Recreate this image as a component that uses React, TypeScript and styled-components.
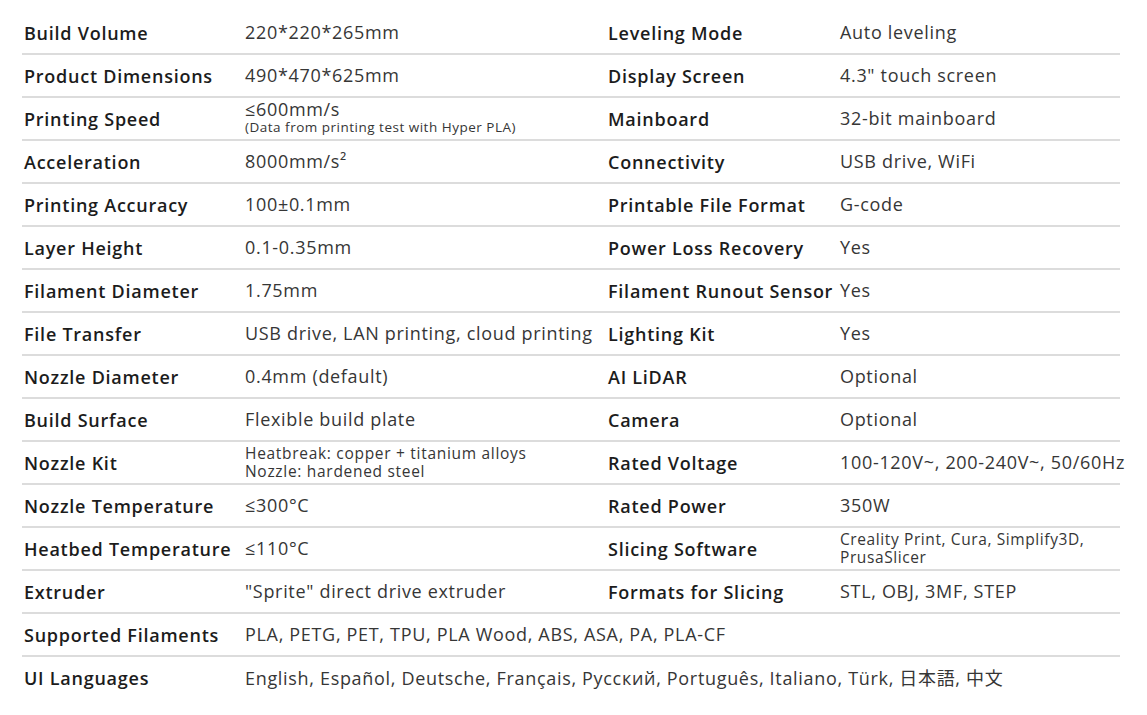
import React from "react";
import styled, { createGlobalStyle } from "styled-components";

const GlobalStyle = createGlobalStyle`
  html, body { margin: 0; padding: 0; background: #ffffff; }
  body { font-family: "Open Sans", "Noto Sans CJK JP", sans-serif; }
`;

const Table = styled.div`
  width: 1098px;
  padding: 12px 0 0 22px;
  display: flex;
  flex-direction: column;
`;

const Row = styled.div<{ $last?: boolean }>`
  display: grid;
  grid-template-columns: 221px 363px 232px 1fr;
  height: 41px;
  border-bottom: ${(p) => (p.$last ? "none" : "2px solid #dcdcdc")};
`;

const Label = styled.div`
  display: flex;
  align-items: center;
  padding: 1px 0 0 2px;
  font-size: 18px;
  font-weight: 600;
  color: #1c1c1c;
  letter-spacing: 0.75px;
  white-space: nowrap;
`;

const Value = styled.div<{ $span?: boolean }>`
  display: flex;
  flex-direction: column;
  justify-content: center;
  padding: 0 0 1px 2px;
  font-size: 18px;
  font-weight: 400;
  color: #363636;
  letter-spacing: 0.68px;
  white-space: nowrap;
  grid-column: ${(p) => (p.$span ? "2 / 5" : "auto")};
`;

const Line = styled.span<{ $size: number; $spacing: number }>`
  display: block;
  font-size: ${(p) => p.$size}px;
  line-height: 18px;
  letter-spacing: ${(p) => p.$spacing}px;
`;

type Cell = string | { lines: [string, number, number][] };

const rows: [string, Cell, string, Cell][] = [
  ["Build Volume", "220*220*265mm", "Leveling Mode", "Auto leveling"],
  ["Product Dimensions", "490*470*625mm", "Display Screen", '4.3" touch screen'],
  [
    "Printing Speed",
    { lines: [["≤600mm/s", 18, 0.68], ["(Data from printing test with Hyper PLA)", 13.5, 0.5]] },
    "Mainboard",
    "32-bit mainboard",
  ],
  ["Acceleration", "8000mm/s²", "Connectivity", "USB drive, WiFi"],
  ["Printing Accuracy", "100±0.1mm", "Printable File Format", "G-code"],
  ["Layer Height", "0.1-0.35mm", "Power Loss Recovery", "Yes"],
  ["Filament Diameter", "1.75mm", "Filament Runout Sensor", "Yes"],
  ["File Transfer", "USB drive, LAN printing, cloud printing", "Lighting Kit", "Yes"],
  ["Nozzle Diameter", "0.4mm (default)", "AI LiDAR", "Optional"],
  ["Build Surface", "Flexible build plate", "Camera", "Optional"],
  [
    "Nozzle Kit",
    { lines: [["Heatbreak: copper + titanium alloys", 15.5, 0.7], ["Nozzle: hardened steel", 15.5, 0.7]] },
    "Rated Voltage",
    "100-120V~, 200-240V~, 50/60Hz",
  ],
  ["Nozzle Temperature", "≤300°C", "Rated Power", "350W"],
  [
    "Heatbed Temperature",
    "≤110°C",
    "Slicing Software",
    { lines: [["Creality Print, Cura, Simplify3D,", 15.5, 0.6], ["PrusaSlicer", 15.5, 0.6]] },
  ],
  ["Extruder", '"Sprite" direct drive extruder', "Formats for Slicing", "STL, OBJ, 3MF, STEP"],
];

const wide: [string, string][] = [
  ["Supported Filaments", "PLA, PETG, PET, TPU, PLA Wood, ABS, ASA, PA, PLA-CF"],
  ["UI Languages", "English, Español, Deutsche, Français, Русский, Português, Italiano, Türk, 日本語, 中文"],
];

const renderCell = (c: Cell) =>
  typeof c === "string" ? (
    c
  ) : (
    c.lines.map(([t, s, sp], i) => (
      <Line key={i} $size={s} $spacing={sp}>
        {t}
      </Line>
    ))
  );

export default function App() {
  return (
    <>
      <GlobalStyle />
      <Table>
        {rows.map(([l1, v1, l2, v2], i) => (
          <Row key={i}>
            <Label>{l1}</Label>
            <Value>{renderCell(v1)}</Value>
            <Label>{l2}</Label>
            <Value>{renderCell(v2)}</Value>
          </Row>
        ))}
        {wide.map(([l, v], i) => (
          <Row key={"w" + i} $last={i === wide.length - 1}>
            <Label>{l}</Label>
            <Value $span>{v}</Value>
          </Row>
        ))}
      </Table>
    </>
  );
}
